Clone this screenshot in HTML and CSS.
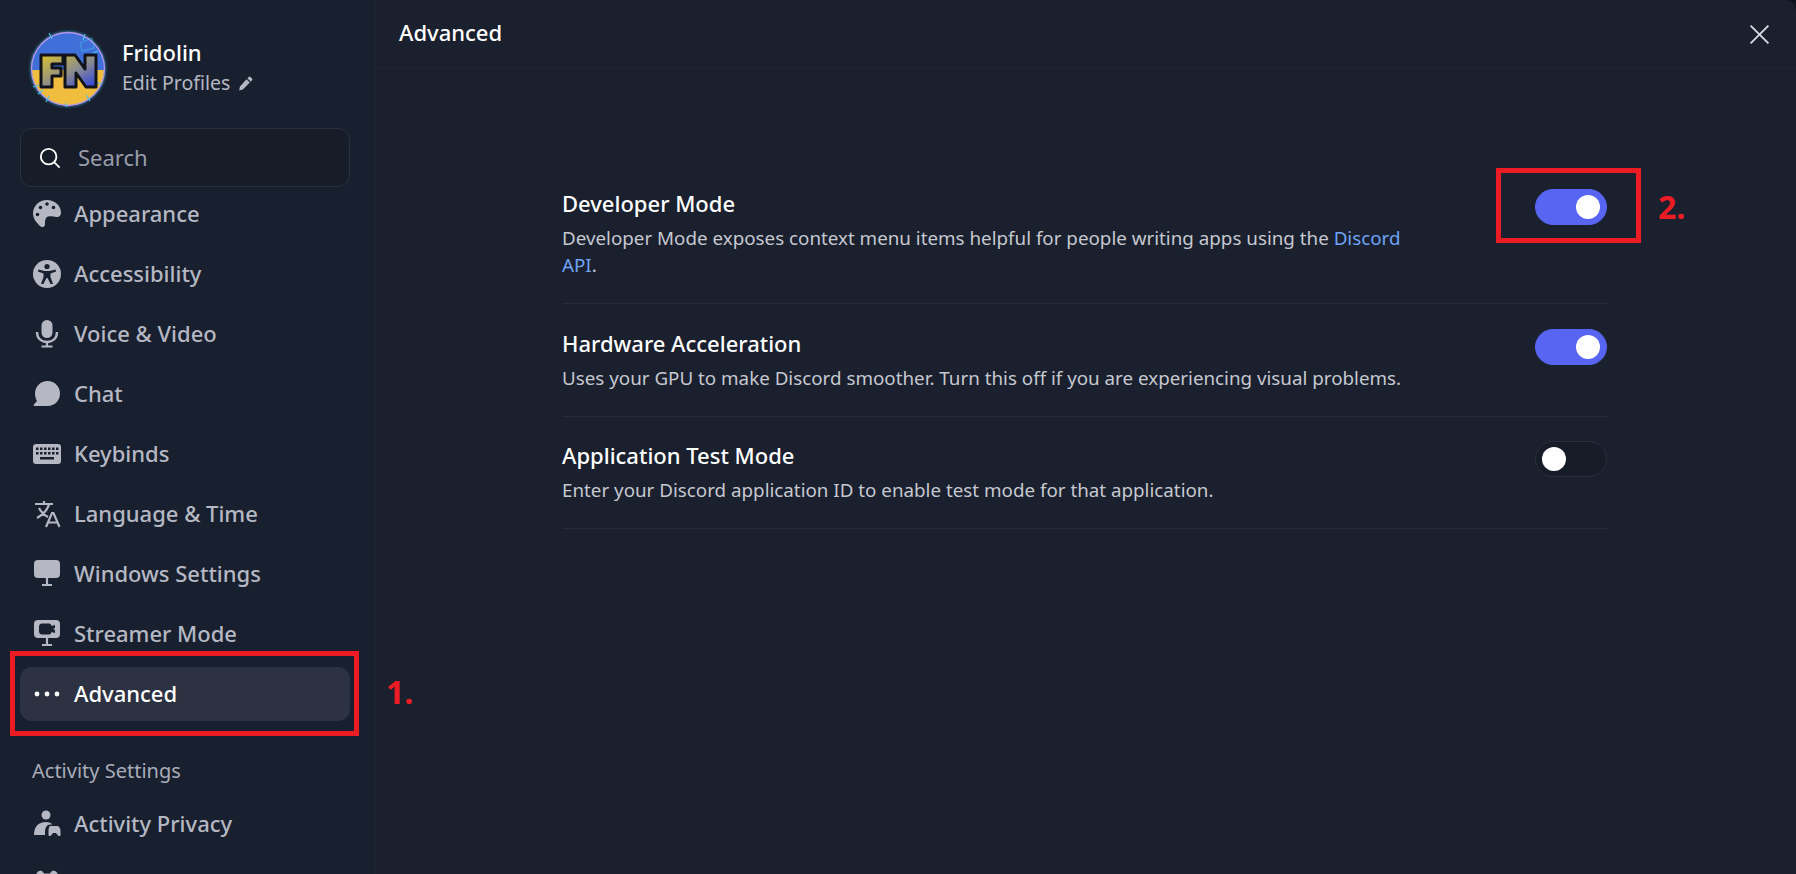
FILE: index.html
```html
<!DOCTYPE html>
<html lang="en">
<head>
    <meta charset="UTF-8">
    <meta name="viewport" content="width=device-width, initial-scale=1.0">
    <title>Advanced - User Settings</title>
    <link rel="stylesheet" href="styles.css">
</head>
<body>
    <div class="app">
        <aside class="sidebar">
            <div class="profile">
                <svg class="avatar" viewBox="0 0 80 80">
                    <defs>
                        <clipPath id="avatarClip"><circle cx="40" cy="40" r="36.500"/></clipPath>
                        <linearGradient id="fnFill" x1="0" y1="0" x2="1" y2="1">
                            <stop offset="0" stop-color="#d8c22c"/>
                            <stop offset="0.55" stop-color="#8b8c90"/>
                            <stop offset="1" stop-color="#2a3fe0"/>
                        </linearGradient>
                        <filter id="glow" x="-20%" y="-20%" width="140%" height="140%"><feGaussianBlur stdDeviation="1.200"/></filter>
                    </defs>
                    <circle cx="40" cy="40" r="37" fill="none" stroke="#3fb8ee" stroke-width="2" stroke-opacity="0.6" filter="url(#glow)"/>
                    <g clip-path="url(#avatarClip)">
                        <rect width="80" height="41" fill="#3f6fd8"/>
                        <rect y="41" width="80" height="39" fill="#f0bd3e"/>
                    </g>
                    <circle cx="40" cy="40" r="36.500" fill="none" stroke="#b795ea" stroke-width="1.300"/>
                    <g fill="none" stroke="#49c6ee" stroke-width="1.100">
                        <path d="M21 4l3 6M57 5l-2 6M70 22l-5 2M73 55l-6-2M62 72l-4-6M18 73l3-6M5 58l6-2M10 65l5-4M38 78v-4"/>
                        <path d="M52 14l12-5 2 10-12 3z" stroke-opacity="0.5"/>
                    </g>
                    <path d="M13 26h22v9h-11v4h9v8h-9v11h-11zM37 26h10l10 14v-14h11v32h-10l-10-14v14h-11z" fill="url(#fnFill)" stroke="#11131b" stroke-width="3" stroke-linejoin="round"/>
                </svg>
                <div class="profile-text">
                    <div class="profile-name">Fridolin</div>
                    <div class="profile-edit">
                        Edit Profiles
                        <svg class="pencil" viewBox="0 0 16 16"><path d="M11.200 1.200a1.600 1.600 0 0 1 2.300 0l1.300 1.300a1.600 1.600 0 0 1 0 2.300l-1.200 1.200-3.600-3.600zM9 3.400l3.600 3.600-7.400 7.400-4 1 .9-4.100z" fill="#b5b8c3"/></svg>
                    </div>
                </div>
            </div>

            <div class="search">
                <svg class="search-icon" viewBox="0 0 24 24"><circle cx="10.500" cy="10.500" r="8.500" fill="none" stroke="#fff" stroke-width="2"/><path d="M16.500 16.500l6 6" stroke="#fff" stroke-width="2"/></svg>
                <span class="search-text">Search</span>
            </div>

            <nav class="nav">
                <a class="nav-item" href="#">
                    <svg viewBox="0 0 28 28"><path d="M14 0C6 0 0 6 0 13.500 0 19 4 23 6.500 25.500c2.500 2.500 5.500 2 5.500-1.500 0-4 .5-7 3.500-7.500 3-.5 5 .5 8 .5 3.500 0 4.500-2 4.500-4.500C28 5 21 0 14 0z" fill="#b5b8c3"/><g fill="#181f2e"><circle cx="4.500" cy="14.500" r="1.800"/><circle cx="7.500" cy="7.500" r="1.800"/><circle cx="14" cy="4" r="1.800"/><circle cx="20.500" cy="7.500" r="1.800"/></g></svg>
                    Appearance
                </a>
                <a class="nav-item" href="#">
                    <svg viewBox="0 0 28 28"><circle cx="14" cy="14" r="14" fill="#b5b8c3"/><g fill="#181f2e"><circle cx="14" cy="6.500" r="2.600"/><path d="M5.500 9.500l6 1.500h5l6-1.500.6 2-5.600 2v3.500l2.500 7h-2.400L14.500 18h-1l-3.100 6H8l2.500-7v-3.500l-5.600-2z"/></g></svg>
                    Accessibility
                </a>
                <a class="nav-item" href="#">
                    <svg viewBox="0 0 28 28"><rect x="8.500" y="0" width="11" height="18" rx="5.500" fill="#b5b8c3"/><path d="M4 12c0 6 4 10 10 10s10-4 10-10" fill="none" stroke="#b5b8c3" stroke-width="2.400"/><path d="M14 22v4M8.500 26.500h11" stroke="#b5b8c3" stroke-width="2.200"/></svg>
                    Voice &amp; Video
                </a>
                <a class="nav-item" href="#">
                    <svg viewBox="0 0 28 28"><path d="M14.500 1C21.500 1 27 6.500 27 13.500S21.500 26 14.500 26H1.500c-.8 0-1.100-.9-.6-1.500L4 21C2.800 19 2 16.300 2 13.500 2 6.500 7.500 1 14.500 1z" fill="#b5b8c3"/></svg>
                    Chat
                </a>
                <a class="nav-item" href="#">
                    <svg viewBox="0 0 28 28"><rect x="0" y="4" width="28" height="20" rx="3" fill="#b5b8c3"/><g fill="#181f2e"><rect x="3" y="7.500" width="2.500" height="2.500"/><rect x="7" y="7.500" width="2.500" height="2.500"/><rect x="11" y="7.500" width="2.500" height="2.500"/><rect x="15" y="7.500" width="2.500" height="2.500"/><rect x="19" y="7.500" width="2.500" height="2.500"/><rect x="23" y="7.500" width="2.500" height="2.500"/><rect x="3" y="12" width="2.500" height="2.500"/><rect x="7" y="12" width="2.500" height="2.500"/><rect x="11" y="12" width="2.500" height="2.500"/><rect x="15" y="12" width="2.500" height="2.500"/><rect x="19" y="12" width="2.500" height="2.500"/><rect x="23" y="12" width="2.500" height="2.500"/><rect x="7" y="17" width="14" height="2.500"/></g></svg>
                    Keybinds
                </a>
                <a class="nav-item" href="#">
                    <svg viewBox="0 0 28 28" fill="none" stroke="#b5b8c3" stroke-width="2.200"><path d="M2 4h18M11 1v3M16 4c-1 5-6 11-12 14M6 8c2 4 5 7 9 9"/><path d="M13 27l6-14h1.500l6 14M15 22.500h10"/></svg>
                    Language &amp; Time
                </a>
                <a class="nav-item" href="#">
                    <svg viewBox="0 0 28 28"><rect x="1" y="0" width="26" height="18" rx="4" fill="#b5b8c3"/><path d="M14 18v6M9 25h10" stroke="#b5b8c3" stroke-width="2.200"/></svg>
                    Windows Settings
                </a>
                <a class="nav-item" href="#">
                    <svg viewBox="0 0 28 28"><rect x="1" y="0" width="26" height="18" rx="4" fill="#b5b8c3"/><path d="M14 18v6M9 25h10" stroke="#b5b8c3" stroke-width="2.200"/><path d="M9 3.500h7c1.500 0 2.500 1 2.500 2.500l3.500-1v3l-2 1 2 1v3l-3.500-1c0 1.500-1 2.500-2.500 2.500H9c-2 0-3-1.500-3-3V6.500c0-1.500 1-3 3-3z" fill="#181f2e"/></svg>
                    Streamer Mode
                </a>
                <a class="nav-item active" href="#">
                    <svg viewBox="0 0 28 28"><g fill="#fff"><circle cx="4" cy="14" r="2.400"/><circle cx="14" cy="14" r="2.400"/><circle cx="24" cy="14" r="2.400"/></g></svg>
                    Advanced
                </a>
                <div class="nav-heading">Activity Settings</div>
                <a class="nav-item" href="#">
                    <svg viewBox="0 0 28 28"><circle cx="13" cy="5" r="4.500" fill="#b5b8c3"/><path d="M1 25c0-8 4-13 12-13 3 0 5 1 6.500 2.500H17c-3 0-5 3-5 8v2.500z" fill="#b5b8c3"/><path d="M17 16h7c2 0 3.500 2 3.500 5v4c0 1-1.500 1.500-2.500.5l-2-2.500h-3l-2 2.500c-1 1-2.500.5-2.500-.5v-4c0-3 1-5 1.500-5z" fill="#b5b8c3"/></svg>
                    Activity Privacy
                </a>
                <!-- only the top of this icon is above the fold -->
                <a class="nav-item" href="#">
                    <svg viewBox="0 0 28 28"><path d="M5 1.500c1.500-1 4-1 5 .5l1 1.500h6l1-1.500c1-1.500 3.500-1.500 5-.5 2 1.500 4 8 4 14 0 4-3 5-5 3l-3-3H9l-3 3c-2 2-5 1-5-3 0-6 2-12.500 4-14z" fill="#b5b8c3"/></svg>
                </a>
            </nav>
        </aside>

        <main class="content">
            <header class="content-header">
                <h1>Advanced</h1>
                <svg class="close" viewBox="0 0 20 20"><path d="M1.500 1.500l17 17M18.500 1.500l-17 17" stroke="#d5d7de" stroke-width="1.800"/></svg>
            </header>
            <section class="settings">
                <div class="setting">
                    <div class="setting-text">
                        <div class="setting-title">Developer Mode</div>
                        <p class="setting-desc">Developer Mode exposes context menu items helpful for people writing apps using the <a href="#">Discord</a> <a href="#">API</a>.</p>
                    </div>
                    <div class="toggle on"><span class="knob"></span></div>
                </div>
                <div class="setting">
                    <div class="setting-text">
                        <div class="setting-title">Hardware Acceleration</div>
                        <p class="setting-desc">Uses your GPU to make Discord smoother. Turn this off if you are experiencing visual problems.</p>
                    </div>
                    <div class="toggle on"><span class="knob"></span></div>
                </div>
                <div class="setting">
                    <div class="setting-text">
                        <div class="setting-title">Application Test Mode</div>
                        <p class="setting-desc">Enter your Discord application ID to enable test mode for that application.</p>
                    </div>
                    <div class="toggle"><span class="knob"></span></div>
                </div>
            </section>
        </main>
    </div>

    <!-- red annotations drawn over the screenshot -->
    <div class="mark mark-nav"></div>
    <div class="mark-label label-nav">1.</div>
    <div class="mark mark-toggle"></div>
    <div class="mark-label label-toggle">2.</div>
</body>
</html>
```

FILE: styles.css
```css
html, body {
    height: 100%;
    margin: 0;
    overflow: hidden;
}
body {
    font-family: "Noto Sans", sans-serif;
    background-color: #0f131c;
    color: #fff;
}
.app {
    display: flex;
    height: 874px;
    background-color: #1a202e;
    border-top-right-radius: 10px;
    overflow: hidden;
}

/* sidebar */
.sidebar {
    width: 375px;
    flex-shrink: 0;
    box-sizing: border-box;
    padding: 0 24px 0 20px;
    background-color: #181f2e;
    border-right: 1px solid #1f2533;
    overflow: hidden;
}
.profile {
    display: flex;
    align-items: center;
    height: 128px;
    padding: 7px 0 0 8px;
    box-sizing: border-box;
}
.avatar {
    width: 80px;
    height: 80px;
    margin: 2px 14px 0 0;
    flex-shrink: 0;
    overflow: visible;
}
.profile-name {
    font-size: 22px;
    font-weight: 500;
    line-height: 30px;
}
.profile-edit {
    display: flex;
    align-items: center;
    gap: 8px;
    margin-top: 1px;
    font-size: 19.500px;
    line-height: 30px;
    color: #b5b8c3;
}
.pencil {
    width: 15px;
    height: 15px;
}
.search {
    display: flex;
    align-items: center;
    gap: 17px;
    height: 59px;
    box-sizing: border-box;
    padding-left: 18px;
    background-color: #171c29;
    border: 1px solid #2a3040;
    border-radius: 12px;
    font-size: 22px;
    color: #9a9da9;
}
.search-icon {
    width: 22px;
    height: 22px;
}
.search-text {
    margin-bottom: 2px;
}
.nav {
    display: flex;
    flex-direction: column;
    gap: 6px;
}
.nav-item {
    display: flex;
    align-items: center;
    gap: 13px;
    height: 54px;
    flex-shrink: 0;
    box-sizing: border-box;
    padding: 0 0 3px 13px;
    border-radius: 12px;
    text-decoration: none;
    font-size: 22px;
    font-weight: 500;
    color: #b5b8c3;
}
.nav-item svg {
    width: 28px;
    height: 28px;
    flex-shrink: 0;
    margin-top: 3px;
}
.nav-item.active {
    background-color: #2c3242;
    color: #fff;
}
.nav-heading {
    margin: 32px 0 8px 12px;
    font-size: 20px;
    line-height: 24px;
    color: #a9acb8;
}

/* content */
.content {
    flex: 1;
}
.content-header {
    display: flex;
    align-items: center;
    justify-content: space-between;
    height: 68px;
    box-sizing: content-box;
    padding: 0 26px 0 24px;
    border-bottom: 1px solid #1f2533;
}
.content-header h1 {
    margin: 0 0 5px;
    font-size: 22px;
    font-weight: 500;
}
.close {
    width: 21px;
    height: 21px;
}
.settings {
    width: 1044px;
    margin: 120px 0 0 188px;
}
.setting {
    display: flex;
    justify-content: space-between;
    padding-bottom: 24px;
    margin-bottom: 24.500px;
    border-bottom: 1px solid #262c3a;
}
.setting-text {
    width: 850px;
    margin-left: -1px;
}
.setting-title {
    font-size: 22px;
    font-weight: 500;
    line-height: 28px;
}
.setting-desc {
    margin: 8px 0 0;
    font-size: 18.800px;
    line-height: 27px;
    color: #c6c8d0;
}
.setting-desc a {
    color: #6ea3f5;
    text-decoration: none;
}
.toggle {
    width: 72px;
    height: 36px;
    box-sizing: border-box;
    padding: 5px 6px;
    border: 1px solid #282e3c;
    border-radius: 18px;
    background-color: #171c29;
}
.toggle.on {
    display: flex;
    justify-content: flex-end;
    border-color: #5865f2;
    background-color: #5865f2;
}
.knob {
    display: block;
    width: 24px;
    height: 24px;
    border-radius: 50%;
    background-color: #fff;
}

/* annotations */
.mark {
    position: absolute;
    box-sizing: border-box;
    border: 5px solid #ed1c24;
}
.mark-nav {
    left: 10px;
    top: 651px;
    width: 349px;
    height: 85px;
}
.mark-toggle {
    left: 1496px;
    top: 168px;
    width: 145px;
    height: 75px;
}
.mark-label {
    position: absolute;
    font-family: "Open Sans", sans-serif;
    font-size: 32px;
    font-weight: 700;
    line-height: 40px;
    color: #ed1c24;
}
.label-nav {
    left: 386px;
    top: 672px;
}
.label-toggle {
    left: 1658px;
    top: 187px;
}
```
